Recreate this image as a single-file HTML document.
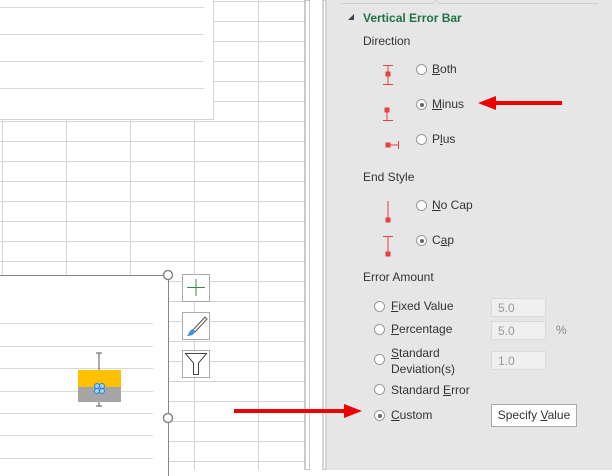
<!DOCTYPE html><html><head><style>
body{margin:0;width:612px;height:470px;overflow:hidden;position:relative;font-family:"Liberation Sans",sans-serif;background:#fff}
.a{position:absolute}
.grid{left:0;top:0;width:306px;height:470px;background-image:linear-gradient(#d4d4d4 1px,transparent 1px),linear-gradient(90deg,#d4d4d4 1px,transparent 1px);background-size:64px 20px;background-position:2px 1px}
.t{font-size:12px;color:#333}
.r{width:11px;height:11px;border:1px solid #999;border-radius:50%;background:#fff;box-sizing:border-box}
.r.on::after{content:"";position:absolute;left:2.5px;top:2.5px;width:4px;height:4px;border-radius:50%;background:#666}
.in{width:55px;height:19px;background:#efefef;border:1px solid #dadada;box-sizing:border-box;font-size:12px;color:#999;padding:2px 6px}
.ln{height:1px;background:#d9d9d9}
</style></head><body>
<div class="a grid"></div>
<div class="a" style="left:0;top:0;width:213px;height:119px;background:#fff;border-right:1px solid #d4d4d4;border-bottom:1px solid #d4d4d4"></div>
<div class="a ln" style="left:0;top:7px;width:204px"></div>
<div class="a ln" style="left:0;top:34px;width:204px"></div>
<div class="a ln" style="left:0;top:61px;width:204px"></div>
<div class="a ln" style="left:0;top:88px;width:204px"></div>
<div class="a" style="left:0;top:275px;width:168px;height:200px;background:#fff;border-top:1px solid #888;border-right:1px solid #888"></div>
<div class="a ln" style="left:0;top:323px;width:153px"></div>
<div class="a ln" style="left:0;top:346px;width:153px"></div>
<div class="a ln" style="left:0;top:368px;width:153px"></div>
<div class="a ln" style="left:0;top:391px;width:153px"></div>
<div class="a ln" style="left:0;top:413px;width:153px"></div>
<div class="a ln" style="left:0;top:435px;width:153px"></div>
<div class="a ln" style="left:0;top:458px;width:153px"></div>
<div class="a" style="left:78px;top:370px;width:43px;height:17px;background:#ffc000"></div>
<div class="a" style="left:78px;top:387px;width:43px;height:15px;background:#a5a5a5"></div>
<svg class="a" style="left:0;top:0" width="612" height="470">
<path d="M99 353V370M96 353H102M99 402V406M96 406H102" stroke="#555" fill="none"/>
<g fill="#9cd1f5" stroke="#2f7ed8" stroke-width="1"><circle cx="97" cy="386" r="2.5"/><circle cx="102" cy="386" r="2.5"/><circle cx="97" cy="391" r="2.5"/><circle cx="102" cy="391" r="2.5"/></g>
<circle cx="168" cy="275" r="4.5" fill="#fff" stroke="#888" stroke-width="1.5"/>
<circle cx="168" cy="418" r="4.5" fill="#fff" stroke="#888" stroke-width="1.5"/>
<rect x="182.5" y="274.5" width="27" height="27" fill="#fff" stroke="#aaa"/>
<path d="M196 279V296M187 287.5H205" stroke="#3a8a4a"/>
<rect x="182.5" y="312.5" width="27" height="27" fill="#fff" stroke="#aaa"/>
<path d="M193 330L205 317L207 319L195 332Z" fill="#fff" stroke="#555"/><path d="M187 336C189 334 189 330 193 329L195 332C194 335 190 336 187 336Z" fill="#4a90d9"/>
<rect x="182.5" y="350.5" width="27" height="27" fill="#fff" stroke="#aaa"/>
<path d="M185.5 353.5H206.5L198.5 363V374.5H193.5V363Z" fill="#fff" stroke="#444"/>
<rect x="305" y="0" width="5" height="470" fill="#fff" stroke="#999"/>
<rect x="310" y="0" width="13" height="470" fill="#fff"/>
<rect x="323" y="0" width="3" height="470" fill="#fff" stroke="#aaa"/>
<rect x="327" y="0" width="285" height="470" fill="#e6e6e6"/>
<path d="M341 3.5H433L436 0.5L439 3.5H598" stroke="#cfcfcf" fill="none"/>
<path d="M348 20L354 14V20Z" fill="#444"/>
<g stroke="#e84040" fill="#e84040">
<path d="M383 65.5H393M388 65V84M383 84.5H393" fill="none"/><rect x="386" y="72" width="4" height="4"/>
<rect x="385" y="108" width="4" height="4"/><path d="M387 112V120M383 120.5H393" fill="none"/>
<rect x="386" y="143" width="4" height="4"/><path d="M390 145H398M398.5 141V149" fill="none"/>
<path d="M388 201V218" fill="none"/><rect x="386" y="218" width="4" height="4"/>
<path d="M383 236.5H393M388 236V253" fill="none"/><rect x="386" y="252" width="4" height="4"/>
</g>
<path d="M234 411H348" stroke="#e00" stroke-width="4"/><path d="M344 404L362 411L344 418Z" fill="#e00"/>
<path d="M562 103H492" stroke="#e00" stroke-width="4"/><path d="M496 96L478 103L496 110Z" fill="#e00"/>
</svg>
<div class="a" style="left:363px;top:11px;font-size:12px;font-weight:bold;color:#217346">Vertical Error Bar</div>
<div class="a t" style="left:363px;top:34px">Direction</div>
<div class="a r" style="left:416px;top:64px"></div><div class="a t" style="left:432px;top:62px"><u>B</u>oth</div>
<div class="a r on" style="left:416px;top:99px"></div><div class="a t" style="left:432px;top:97px"><u>M</u>inus</div>
<div class="a r" style="left:416px;top:134px"></div><div class="a t" style="left:432px;top:132px">P<u>l</u>us</div>
<div class="a t" style="left:363px;top:170px">End Style</div>
<div class="a r" style="left:416px;top:200px"></div><div class="a t" style="left:432px;top:198px"><u>N</u>o Cap</div>
<div class="a r on" style="left:416px;top:235px"></div><div class="a t" style="left:432px;top:233px">C<u>a</u>p</div>
<div class="a t" style="left:363px;top:270px">Error Amount</div>
<div class="a r" style="left:374px;top:301px"></div><div class="a t" style="left:391px;top:299px"><u>F</u>ixed Value</div>
<div class="a in" style="left:491px;top:298px">5.0</div>
<div class="a r" style="left:374px;top:324px"></div><div class="a t" style="left:391px;top:322px"><u>P</u>ercentage</div>
<div class="a in" style="left:491px;top:321px">5.0</div><div class="a t" style="left:556px;top:323px;color:#888">%</div>
<div class="a r" style="left:374px;top:354px"></div><div class="a t" style="left:391px;top:345px;line-height:16px"><u>S</u>tandard<br>Deviation(s)</div>
<div class="a in" style="left:491px;top:351px">1.0</div>
<div class="a r" style="left:374px;top:384px"></div><div class="a t" style="left:391px;top:383px">Standard <u>E</u>rror</div>
<div class="a r on" style="left:374px;top:410px"></div><div class="a t" style="left:391px;top:408px"><u>C</u>ustom</div>
<div class="a t" style="left:491px;top:404px;width:86px;height:23px;box-sizing:border-box;border:1px solid #aaa;background:#fff;text-align:center;line-height:21px">Specify <u>V</u>alue</div>
</body></html>
